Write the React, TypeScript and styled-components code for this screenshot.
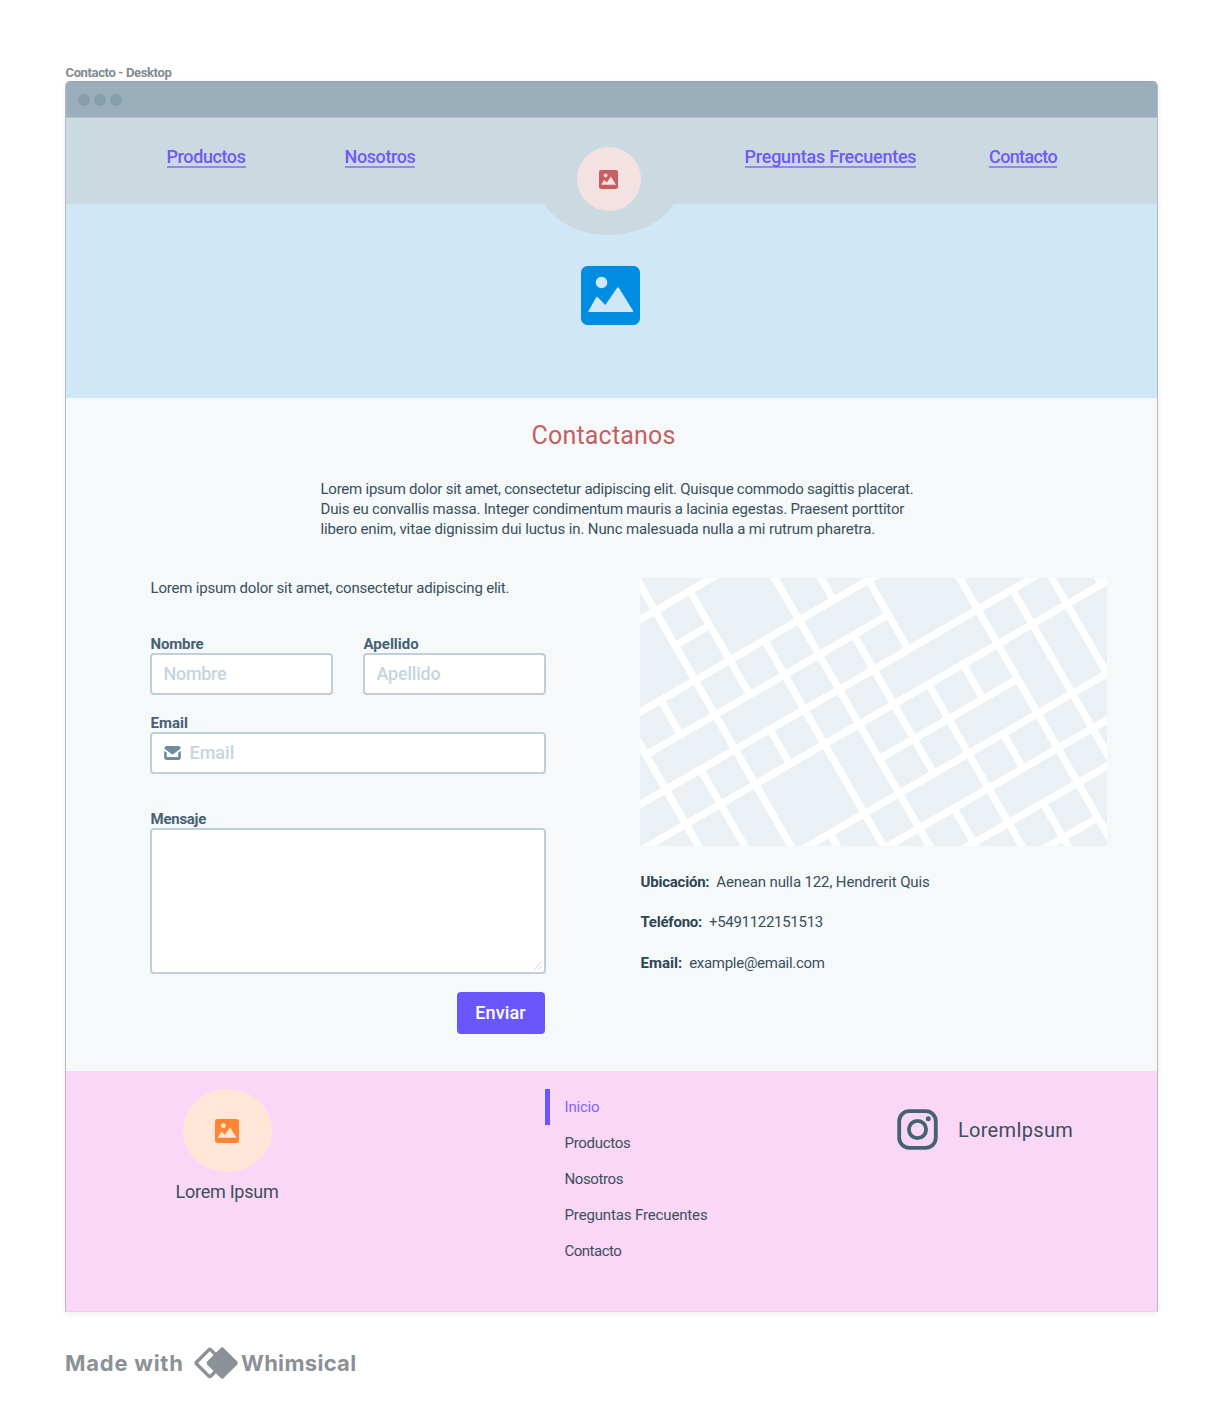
import React from "react";
import styled, { createGlobalStyle } from "styled-components";

const GlobalStyle = createGlobalStyle`
  *, *::before, *::after { box-sizing: border-box; }
  body {
    margin: 0;
    background: #fff;
    font-family: Roboto, "Liberation Sans", sans-serif;
    color: #3a4f5d;
  }
  p, h1, h2, ul { margin: 0; padding: 0; font-weight: inherit; }
  a { color: inherit; text-decoration: none; }
`;

const Page = styled.main`
  width: 1223px;
  height: 1412px;
  padding: 65px 65px 0;
  display: flex;
  flex-direction: column;
`;

const FrameTitle = styled.h1`
  height: 16px;
  padding-left: 0.5px;
  font-size: 13px;
  line-height: 16px;
  font-weight: 700;
  letter-spacing: -0.36px;
  color: #7f8b92;
`;

const Frame = styled.div`
  height: 1231px;
  border: 1px solid #b3bbbf;
  border-top-color: #98a6ad;
  border-bottom-color: #ecd0e8;
  border-radius: 5px 5px 0 0;
  box-shadow: 0 2px 6px rgba(0, 0, 0, 0.07);
  background: #f5f9fa;
`;

const WindowBar = styled.div`
  height: 35px;
  padding-left: 11.5px;
  display: flex;
  align-items: center;
  gap: 4px;
  border-radius: 4px 4px 0 0;
  background: #9aaebb;
`;

const WindowDot = styled.span`
  width: 12px;
  height: 12px;
  border-radius: 50%;
  background: #879eac;
`;

const Nav = styled.nav`
  position: relative;
  height: 86.5px;
  padding: 29px 0 0 100.5px;
  display: grid;
  grid-template-columns: 178px 400px 244.5px auto;
  align-items: start;
  justify-items: start;
  border-top: 1px solid #b3c2cb;
  background: #cbd9e0;
`;

const NavLink = styled.a<{ $track: string }>`
  height: 21px;
  font-size: 18px;
  line-height: 19px;
  font-weight: 500;
  letter-spacing: ${(p) => p.$track};
  color: #7059f8;
  border-bottom: 2px solid #9488ee;
`;

const Notch = styled.div`
  position: absolute;
  z-index: 1;
  left: 470.5px;
  top: 6.5px;
  width: 144px;
  height: 110px;
  display: flex;
  align-items: center;
  justify-content: center;
  border-radius: 50%;
  background: #cbd9e0;
`;

const NavLogo = styled.div`
  width: 64px;
  height: 64px;
  display: flex;
  align-items: center;
  justify-content: center;
  border-radius: 50%;
  background: #f4e1e2;
  margin-bottom: 1px;
`;

const Hero = styled.section`
  height: 194.5px;
  padding-top: 62.5px;
  display: flex;
  justify-content: center;
  align-items: flex-start;
  background: #cfe7f7;

  svg { margin-right: 1.5px; }
`;

const Body = styled.section`
  height: 673px;
  padding: 21px 50px 0 84px;
`;

const Heading = styled.h2`
  margin-left: 381.5px;
  font-size: 25px;
  line-height: 34px;
  letter-spacing: 0.2px;
  color: #c65f62;
`;

const Intro = styled.div`
  margin: 26px 0 0 170.5px;
  font-size: 15px;
  line-height: 20px;
`;

const IntroLine = styled.p<{ $track: string }>`
  letter-spacing: ${(p) => p.$track};
  white-space: nowrap;
`;

const Columns = styled.div`
  margin-top: 39px;
  display: flex;
  justify-content: space-between;
`;

const Form = styled.form`
  width: 396px;
  display: flex;
  flex-direction: column;
`;

const FormNote = styled.p`
  padding-left: 0.5px;
  height: 58px;
  font-size: 15px;
  line-height: 20px;
  letter-spacing: -0.19px;
  white-space: nowrap;
`;

const FieldRow = styled.div`
  display: grid;
  grid-template-columns: 183px 183px;
  justify-content: space-between;
`;

const Field = styled.label<{ $gap?: number }>`
  display: block;
  margin-top: ${(p) => p.$gap ?? 0}px;
`;

const FieldLabel = styled.span<{ $track?: string }>`
  display: block;
  height: 17px;
  padding-left: 0.5px;
  font-size: 15px;
  line-height: 17px;
  font-weight: 700;
  letter-spacing: ${(p) => p.$track ?? "0"};
  color: #466173;
`;

const Control = styled.div`
  height: 42px;
  padding: 0 11.5px;
  display: flex;
  align-items: center;
  gap: 9px;
  border: 2px solid #bfced7;
  border-radius: 4px;
  background: #fff;
`;

const Input = styled.input<{ $track?: string }>`
  flex: 1;
  min-width: 0;
  padding: 0;
  border: 0;
  outline: 0;
  background: transparent;
  font: 500 18px/22px Roboto, "Liberation Sans", sans-serif;
  letter-spacing: ${(p) => p.$track ?? "0"};

  &::placeholder { color: #c6d5de; opacity: 1; }
`;

const MessageBox = styled.div`
  height: 146px;
  padding: 0 1px 1px 0;
  display: flex;
  align-items: flex-end;
  justify-content: flex-end;
  border: 2px solid #bfced7;
  border-radius: 4px;
  background: #fff;
`;

const SubmitButton = styled.button`
  width: 88px;
  height: 42px;
  margin: 18px 1.5px 0 auto;
  padding: 0;
  border: 0;
  border-radius: 4px;
  background: #6a57fb;
  color: #fff;
  font: 500 18px/22px Roboto, "Liberation Sans", sans-serif;
  letter-spacing: 0.1px;
`;

const Location = styled.aside`
  width: 467px;
  display: flex;
  flex-direction: column;
`;

const MapSvg = styled.svg`
  display: block;
  width: 467px;
  height: 268px;
  margin-bottom: 26px;
  background: #ebf0f4;
`;

const Detail = styled.p`
  display: flex;
  gap: 7px;
  height: 40.3px;
  padding-left: 0.5px;
  font-size: 15px;
  line-height: 20px;
`;

const DetailName = styled.strong<{ $track?: string }>`
  font-weight: 700;
  letter-spacing: ${(p) => p.$track ?? "0"};
  color: #2f4553;
`;

const DetailValue = styled.span<{ $track?: string }>`
  letter-spacing: ${(p) => p.$track ?? "0"};
`;

const Footer = styled.footer`
  height: 240px;
  padding-top: 18px;
  display: grid;
  grid-template-columns: 479px 351px auto;
  background: #fbd7f7;
`;

const Brand = styled.div`
  padding-left: 109px;
  width: 213px;
  display: flex;
  flex-direction: column;
  align-items: center;
`;

const BrandLogo = styled.div`
  width: 89px;
  height: 83px;
  display: flex;
  align-items: center;
  justify-content: center;
  border-radius: 50%;
  background: #ffe6d6;
`;

const BrandName = styled.p`
  margin-top: 9px;
  font-size: 18px;
  line-height: 22px;
  letter-spacing: -0.25px;
  white-space: nowrap;
`;

const Menu = styled.ul`
  list-style: none;
`;

const MenuItem = styled.li<{ $active?: boolean; $track: string }>`
  height: 36px;
  padding-left: 14.5px;
  border-left: 5px solid ${(p) => (p.$active ? "#6a57fb" : "transparent")};
  font-size: 15px;
  line-height: 36px;
  letter-spacing: ${(p) => p.$track};
  color: ${(p) => (p.$active ? "#7d66f8" : "#3a4f5d")};
`;

const Social = styled.a`
  height: 42px;
  margin-top: 20px;
  padding-left: 1px;
  display: flex;
  align-items: center;
  gap: 20px;
  font-size: 20px;
  letter-spacing: 0.25px;

  svg { margin-bottom: 2px; }
`;

const Credit = styled.div`
  height: 34px;
  margin-top: 34px;
  display: flex;
  align-items: center;
  font-family: Inter, "Liberation Sans", sans-serif;
  font-size: 22px;
  font-weight: 700;
  line-height: 34px;
  color: #8b9197;

  svg { margin: 0 2.5px 0 9.5px; }
`;

const CreditWord = styled.span<{ $track: string }>`
  width: 118px;
  letter-spacing: ${(p) => p.$track};
  white-space: nowrap;
`;

function PictureIcon({ size, color, paper }: { size: number; color: string; paper: string }) {
  return (
    <svg width={size} height={size} viewBox="0 0 59 59">
      <rect width="59" height="59" rx="6.5" fill={color} />
      <circle cx="20.5" cy="16.5" r="5.8" fill={paper} />
      <path
        d="M7.3 45.2 15.1 31.5Q16 30.1 17 31.5L24.3 39 36 21.9Q37 20.5 38 21.9L52.2 45Q52.6 46 51.6 46H7.8Q6.9 46 7.3 45.2Z"
        fill={paper}
      />
    </svg>
  );
}

function MailIcon() {
  return (
    <svg width="17" height="14" viewBox="0 0 50 42" fill="#718c9c">
      <path d="M1 8Q0 0 8 0H42Q50 0 49 8L28 24Q25 26 22 24Z" />
      <path d="M0 14 8 20V33H42V20L50 14V34Q50 42 42 42H8Q0 42 0 34Z" />
    </svg>
  );
}

function InstagramIcon() {
  return (
    <svg width="41" height="41" viewBox="0 0 41 41" fill="none" stroke="#466173" strokeWidth="3.8">
      <rect x="2.2" y="2.2" width="36.6" height="36.6" rx="10" />
      <circle cx="20.5" cy="20.5" r="8.6" />
      <circle cx="31.3" cy="9.7" r="2.5" fill="#466173" stroke="none" />
    </svg>
  );
}

function DiamondsIcon() {
  return (
    <svg width="46" height="34" viewBox="0 0 46 34">
      <rect x="-10" y="-10" width="20" height="20" rx="1.4" transform="translate(16.8 17) rotate(45)"
        fill="none" stroke="#8b9197" strokeWidth="3.4" />
      <rect x="-11.7" y="-11.7" width="23.4" height="23.4" rx="2.4" transform="translate(29.2 17) rotate(45)"
        fill="#8b9197" />
    </svg>
  );
}

// Streets follow a 40px grid turned by 30 degrees.
// Each entry is [grid line, first crossing, last crossing].
type Street = [number, number, number];
const OUT = 24;

const ROWS: Street[] = [
  [0, -OUT, OUT],
  [1, 2, 3],
  [2, -OUT, OUT],
  [3, 0, 7],
  [4, -OUT, OUT],
  [5, -OUT, OUT],
  [6, 5, 9],
  [7, -OUT, OUT],
  [8, -OUT, OUT],
  [9, -OUT, OUT],
  [10, -OUT, 9],
];

const COLUMNS: Street[] = [
  [0, -OUT, OUT],
  [1, 2, 3],
  [1, 4, OUT],
  [2, -OUT, OUT],
  [3, 0, 3],
  [3, 4, 5],
  [3, 7, OUT],
  [4, 2, OUT],
  [5, -OUT, OUT],
  [6, -OUT, 2],
  [6, 3, 7],
  [6, 8, OUT],
  [7, 2, 4],
  [7, 5, OUT],
  [8, 5, 6],
  [8, 7, 8],
  [8, 9, OUT],
  [9, -OUT, OUT],
  [10, 4, OUT],
  [11, -OUT, OUT],
  [12, -OUT, 5],
];

const columnX = (i: number) => -83.3 + 40 * i;
const rowY = (j: number) => 35.9 + 40.05 * j;

function CityMap() {
  return (
    <MapSvg viewBox="0 0 467 268">
      <g transform="rotate(-30)" stroke="#fff" strokeWidth="7.3">
        {ROWS.map(([line, from, to], i) => (
          <line key={`row${i}`} x1={columnX(from)} x2={columnX(to)} y1={rowY(line)} y2={rowY(line)} />
        ))}
        {COLUMNS.map(([line, from, to], i) => (
          <line key={`col${i}`} x1={columnX(line)} x2={columnX(line)} y1={rowY(from)} y2={rowY(to)} />
        ))}
      </g>
    </MapSvg>
  );
}

export default function App() {
  return (
    <>
      <GlobalStyle />
      <Page>
        <FrameTitle>Contacto - Desktop</FrameTitle>
        <Frame>
          <WindowBar>
            <WindowDot />
            <WindowDot />
            <WindowDot />
          </WindowBar>
          <Nav>
            <NavLink $track="-0.4px">Productos</NavLink>
            <NavLink $track="-0.39px">Nosotros</NavLink>
            <NavLink $track="-0.23px">Preguntas Frecuentes</NavLink>
            <NavLink $track="-0.62px">Contacto</NavLink>
            <Notch>
              <NavLogo>
                <PictureIcon size={19} color="#c65f62" paper="#f4e1e2" />
              </NavLogo>
            </Notch>
          </Nav>
          <Hero>
            <PictureIcon size={59} color="#008ce0" paper="#cfe7f7" />
          </Hero>
          <Body>
            <Heading>Contactanos</Heading>
            <Intro>
              <IntroLine $track="-0.235px">
                Lorem ipsum dolor sit amet, consectetur adipiscing elit. Quisque commodo sagittis placerat.
              </IntroLine>
              <IntroLine $track="-0.2px">
                Duis eu convallis massa. Integer condimentum mauris a lacinia egestas. Praesent porttitor
              </IntroLine>
              <IntroLine $track="-0.125px">
                libero enim, vitae dignissim dui luctus in. Nunc malesuada nulla a mi rutrum pharetra.
              </IntroLine>
            </Intro>
            <Columns>
              <Form>
                <FormNote>Lorem ipsum dolor sit amet, consectetur adipiscing elit.</FormNote>
                <FieldRow>
                  <Field>
                    <FieldLabel $track="-0.15px">Nombre</FieldLabel>
                    <Control>
                      <Input $track="-0.3px" placeholder="Nombre" />
                    </Control>
                  </Field>
                  <Field>
                    <FieldLabel>Apellido</FieldLabel>
                    <Control>
                      <Input $track="-0.2px" placeholder="Apellido" />
                    </Control>
                  </Field>
                </FieldRow>
                <Field $gap={20}>
                  <FieldLabel>Email</FieldLabel>
                  <Control>
                    <MailIcon />
                    <Input placeholder="Email" />
                  </Control>
                </Field>
                <Field $gap={37}>
                  <FieldLabel $track="-0.25px">Mensaje</FieldLabel>
                  <MessageBox>
                    <svg width="10" height="10" viewBox="0 0 10 10" stroke="#c6d5de" strokeWidth="1">
                      <path d="M0.5 9 8.8 0.8M4.8 9 9 5" />
                    </svg>
                  </MessageBox>
                </Field>
                <SubmitButton type="button">Enviar</SubmitButton>
              </Form>
              <Location>
                <CityMap />
                <Detail>
                  <DetailName $track="-0.22px">Ubicación:</DetailName>
                  <DetailValue $track="-0.13px">Aenean nulla 122, Hendrerit Quis</DetailValue>
                </Detail>
                <Detail>
                  <DetailName $track="-0.25px">Teléfono:</DetailName>
                  <DetailValue $track="-0.3px">+5491122151513</DetailValue>
                </Detail>
                <Detail>
                  <DetailName>Email:</DetailName>
                  <DetailValue $track="-0.28px">example@email.com</DetailValue>
                </Detail>
              </Location>
            </Columns>
          </Body>
          <Footer>
            <Brand>
              <BrandLogo>
                <PictureIcon size={24} color="#ff8534" paper="#ffe6d6" />
              </BrandLogo>
              <BrandName>Lorem Ipsum</BrandName>
            </Brand>
            <Menu>
              <MenuItem $active $track="-0.2px">Inicio</MenuItem>
              <MenuItem $track="-0.3px">Productos</MenuItem>
              <MenuItem $track="-0.38px">Nosotros</MenuItem>
              <MenuItem $track="-0.14px">Preguntas Frecuentes</MenuItem>
              <MenuItem $track="-0.5px">Contacto</MenuItem>
            </Menu>
            <Social>
              <InstagramIcon />
              LoremIpsum
            </Social>
          </Footer>
        </Frame>
        <Credit>
          <CreditWord $track="0.75px">Made with</CreditWord>
          <DiamondsIcon />
          <CreditWord $track="0.3px">Whimsical</CreditWord>
        </Credit>
      </Page>
    </>
  );
}
